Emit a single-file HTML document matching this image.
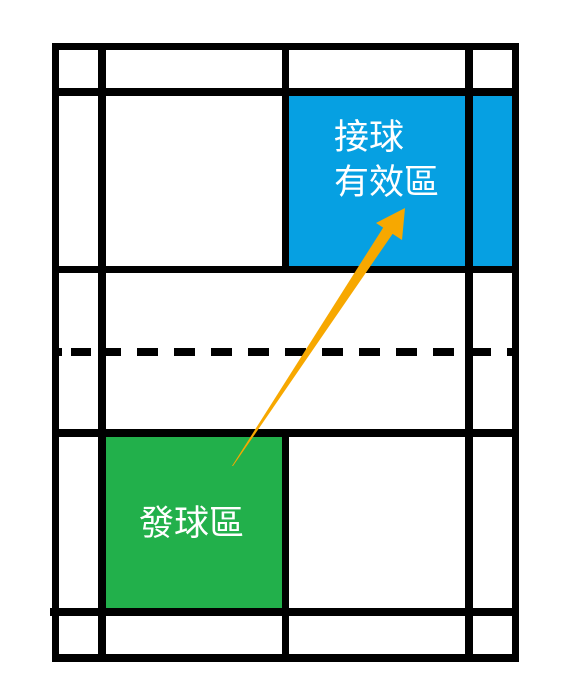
<!DOCTYPE html>
<html><head><meta charset="utf-8"><style>
html,body{margin:0;padding:0;background:#fff;}
body{width:581px;height:700px;position:relative;overflow:hidden;}
</style></head><body>
<svg width="581" height="700" viewBox="0 0 581 700" style="position:absolute;left:0;top:0">
<rect x="289" y="96" width="176" height="170" fill="#06a0e2"/>
<rect x="473" y="96" width="39" height="170" fill="#06a0e2"/>
<rect x="106" y="437" width="176" height="171" fill="#22b04b"/>
<g fill="#000">
<rect x="52" y="43" width="467" height="7"/>
<rect x="52" y="654" width="467" height="8"/>
<rect x="52" y="43" width="7" height="619"/>
<rect x="512" y="43" width="7" height="619"/>
<rect x="98" y="43" width="8" height="619"/>
<rect x="465" y="43" width="8" height="619"/>
<rect x="282" y="43" width="7" height="227"/>
<rect x="282" y="433" width="7" height="229"/>
<rect x="52" y="88" width="467" height="8"/>
<rect x="52" y="266" width="467" height="7"/>
<rect x="52" y="429" width="467" height="8"/>
<rect x="50" y="608" width="469" height="8"/>
</g>
<line x1="56" y1="352" x2="100" y2="352" stroke="#000" stroke-width="8" stroke-dasharray="6 9 20 9"/>
<line x1="100" y1="352" x2="516" y2="352" stroke="#000" stroke-width="8" stroke-dasharray="21 16"/>
<polygon points="232,466 233,466 398,226 388,220" fill="#f7a800"/>
<polygon points="405,208 376,223 402,240" fill="#f7a800"/>
<g fill="#fff" font-family="'Liberation Sans','Noto Sans CJK TC',sans-serif" font-size="35">
<text x="334" y="149">接球</text>
<text x="334" y="194">有效區</text>
<text x="139" y="535">發球區</text>
</g>
</svg>
</body></html>
